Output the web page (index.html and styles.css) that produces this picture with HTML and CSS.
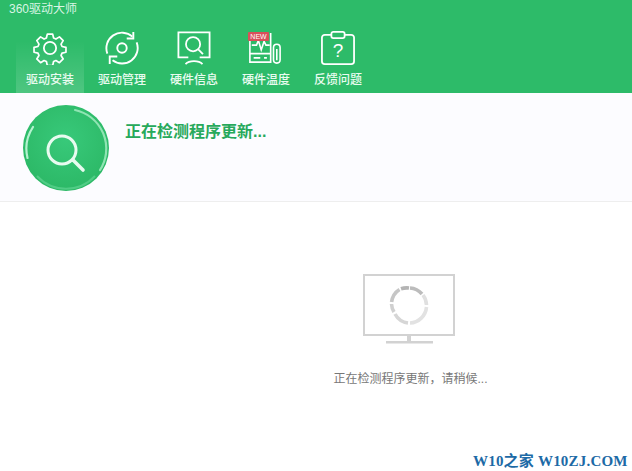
FILE: index.html
```html
<!DOCTYPE html>
<html lang="zh">
<head>
<meta charset="utf-8">
<title>360驱动大师</title>
<link rel="stylesheet" href="styles.css">
</head>
<body>
<div class="app">
  <header class="top">
    <div class="title">360驱动大师</div>
    <nav class="nav">
      <div class="tab active">
        <svg class="ico" viewBox="0 0 36 36" fill="none" stroke="#fff" stroke-width="1.9" stroke-linejoin="round">
          <path d="M15 2.500h6l1 4.400 2.600 1.100 3.900-2.400 4.200 4.200-2.400 3.900 1.100 2.600 4.400 1v5.400l-4.400 1-1.100 2.600 2.400 3.900-4.200 4.200-3.900-2.400-2.600 1.100-1 4.400h-6l-1-4.400-2.600-1.100-3.900 2.400-4.200-4.200 2.400-3.900-1.100-2.600-4.400-1v-5.400l4.400-1 1.100-2.600-2.400-3.900 4.200-4.200 3.900 2.400 2.600-1.100z" transform="translate(.9 .9) scale(.95)"/>
          <circle cx="18" cy="18" r="6.500"/>
        </svg>
        <span>驱动安装</span>
      </div>
      <div class="tab">
        <svg class="ico" viewBox="0 0 36 36" fill="none" stroke="#fff" stroke-width="2">
          <path d="M2.500 24A16.500 16.500 0 0 1 29 6"/>
          <path d="M33.500 12A16.500 16.500 0 0 1 8 31"/>
          <path d="M30 1v7h-7"/>
          <path d="M5 35v-8h8"/>
          <circle cx="18" cy="18" r="5"/>
        </svg>
        <span>驱动管理</span>
      </div>
      <div class="tab">
        <svg class="ico" viewBox="0 0 36 36" fill="none" stroke="#fff" stroke-width="1.900">
          <path d="M12 28H1.500V1.500h33V28H24"/>
          <circle cx="17" cy="14" r="7.500"/>
          <path d="M22.500 19.500l5 5"/>
          <path d="M9 35c4-4 14-4 18 0"/>
        </svg>
        <span>硬件信息</span>
      </div>
      <div class="tab">
        <span class="temp">
          <svg class="ico" viewBox="0 0 36 36" fill="none" stroke="#fff" stroke-width="1.700">
            <path d="M2 4v29h22V2"/>
            <path d="M2 24h22M6 28.500h7M17 28.500h3"/>
            <path d="M4 15h5l2-5 3 10 3-9 2 4h4"/>
            <rect x="27" y="14" width="7" height="20" rx="3.500"/>
            <path d="M30.500 19v12"/>
          </svg>
          <b class="new">NEW</b>
        </span>
        <span>硬件温度</span>
      </div>
      <div class="tab">
        <svg class="ico" viewBox="0 0 36 36" fill="none" stroke="#fff" stroke-width="1.900">
          <path d="M11 4H4a3 3 0 0 0-3 3v25a3 3 0 0 0 3 3h28a3 3 0 0 0 3-3V7a3 3 0 0 0-3-3h-7"/>
          <rect x="11" y="1" width="14" height="6.500" rx="2"/>
          <text class="qm" x="18" y="28" text-anchor="middle">?</text>
        </svg>
        <span>反馈问题</span>
      </div>
    </nav>
  </header>

  <section class="status">
    <div class="badge">
      <svg viewBox="0 0 86 86" width="86" height="86">
        <defs>
          <radialGradient id="g" cx="50%" cy="40%" r="60%">
            <stop offset="0" stop-color="#38c97a"/>
            <stop offset="1" stop-color="#2cb866"/>
          </radialGradient>
        </defs>
        <circle cx="43" cy="43" r="43" fill="url(#g)"/>
        <path d="M4.500 53A39.500 39.500 0 0 1 10 22" fill="none" stroke="#b4f2cf" stroke-width="2.200" stroke-linecap="round"/>
        <path d="M52 5A39.500 39.500 0 0 1 77 65" fill="none" stroke="#8fe4b3" stroke-width="2.200" stroke-linecap="round"/>
        <path d="M14 71A39.500 39.500 0 0 0 72 71" fill="none" stroke="#50cc85" stroke-width="2"/>
        <circle cx="39" cy="45" r="14" fill="none" stroke="#e8fbf0" stroke-width="3"/>
        <path d="M50 55l10 10" stroke="#e8fbf0" stroke-width="3.600" stroke-linecap="round"/>
      </svg>
    </div>
    <h1 class="head">正在检测程序更新...</h1>
  </section>

  <main class="body">
    <div class="center">
      <div class="monitor">
        <svg viewBox="0 0 92 70" width="92" height="70" fill="none">
          <rect x="1" y="1" width="90" height="60" stroke="#d2d2d2" stroke-width="2"/>
          <rect x="44" y="61" width="4" height="7" fill="#d2d2d2"/>
          <rect x="23" y="67" width="47" height="2.500" fill="#d2d2d2"/>
          <g stroke-width="3.600">
            <path d="M38 14.800A17.500 17.500 0 0 1 46 14" stroke="#b4b4b4"/>
            <path d="M47 14A17.500 17.500 0 0 1 59 20" stroke="#bcbcbc"/>
            <path d="M60 21A17.500 17.500 0 0 1 63.500 31" stroke="#e0e0e0"/>
            <path d="M63.500 33A17.500 17.500 0 0 1 47 49" stroke="#e2e2e2"/>
            <path d="M45 49A17.500 17.500 0 0 1 32 40" stroke="#d6d6d6"/>
            <path d="M31 38A17.500 17.500 0 0 1 28.500 30" stroke="#d0d0d0"/>
            <path d="M28.600 28A17.500 17.500 0 0 1 36.500 15.500" stroke="#c6c6c6"/>
          </g>
        </svg>
      </div>
      <p class="wait">正在检测程序更新，请稍候...</p>
    </div>
    <div class="mark">W10之家 W10ZJ.COM</div>
  </main>
</div>
</body>
</html>
```

FILE: styles.css
```css
* { box-sizing: border-box; }
html, body { margin: 0; height: 100%; background: #fff; overflow: hidden; }
body { font-family: "Liberation Sans", "Noto Sans CJK SC", sans-serif; }
.app { width: 632px; height: 471px; display: flex; flex-direction: column; }

.top { height: 93px; background: #2dbb69; color: #fff; padding-top: 2px; flex: none; }
.title { height: 26px; padding-left: 9px; font-size: 12px; line-height: 14px; color: #d9f5e4; }
.nav { display: flex; padding-left: 14px; }
.tab { width: 72px; height: 65px; display: flex; flex-direction: column; align-items: center; padding-top: 3px; font-size: 12px; font-weight: 500; line-height: 14px; color: #e9fbf0; }
.tab.active { margin: 0 2px; width: 68px; background: linear-gradient(to bottom, rgba(255,255,255,0) 20%, rgba(255,255,255,.16)); }
.tab.active + .tab { margin-left: 0; }
.ico { width: 34px; height: 34px; display: block; margin-bottom: 8px; }
.temp { position: relative; display: block; width: 36px; height: 34px; margin-bottom: 8px; }
.qm { fill: #fff; stroke: none; font-family: "Liberation Sans", sans-serif; font-size: 20px; }
.new { position: absolute; left: 0; top: 1px; width: 21px; height: 9px; border-radius: 1px; background: #d9505a; color: #fff; font-size: 7px; line-height: 9px; font-weight: 400; text-align: center; }

.status { height: 109px; flex: none; display: flex; padding: 12px 0 0 23px; background: #fcfcff; border-bottom: 1px solid #eeeeee; }
.badge { width: 86px; height: 86px; flex: none; }
.badge svg { display: block; }
.head { margin: 17px 0 0 16px; font-size: 16px; line-height: 20px; font-weight: 700; color: #27a95b; }

.body { position: relative; flex: 1; }
.center { margin: 72px 0 0 334px; width: 153px; display: flex; flex-direction: column; align-items: center; }
.monitor { margin-left: -3px; }
.monitor svg { display: block; }
.wait { margin: 27px 0 0; font-size: 12px; line-height: 16px; color: #777; white-space: nowrap; }
.mark { position: absolute; left: 473px; top: 251px; font-family: "Liberation Serif", "Noto Sans CJK SC", serif; font-size: 15px; line-height: 16px; font-weight: 700; letter-spacing: .2px; color: #1d6aa6; white-space: nowrap; }
```
